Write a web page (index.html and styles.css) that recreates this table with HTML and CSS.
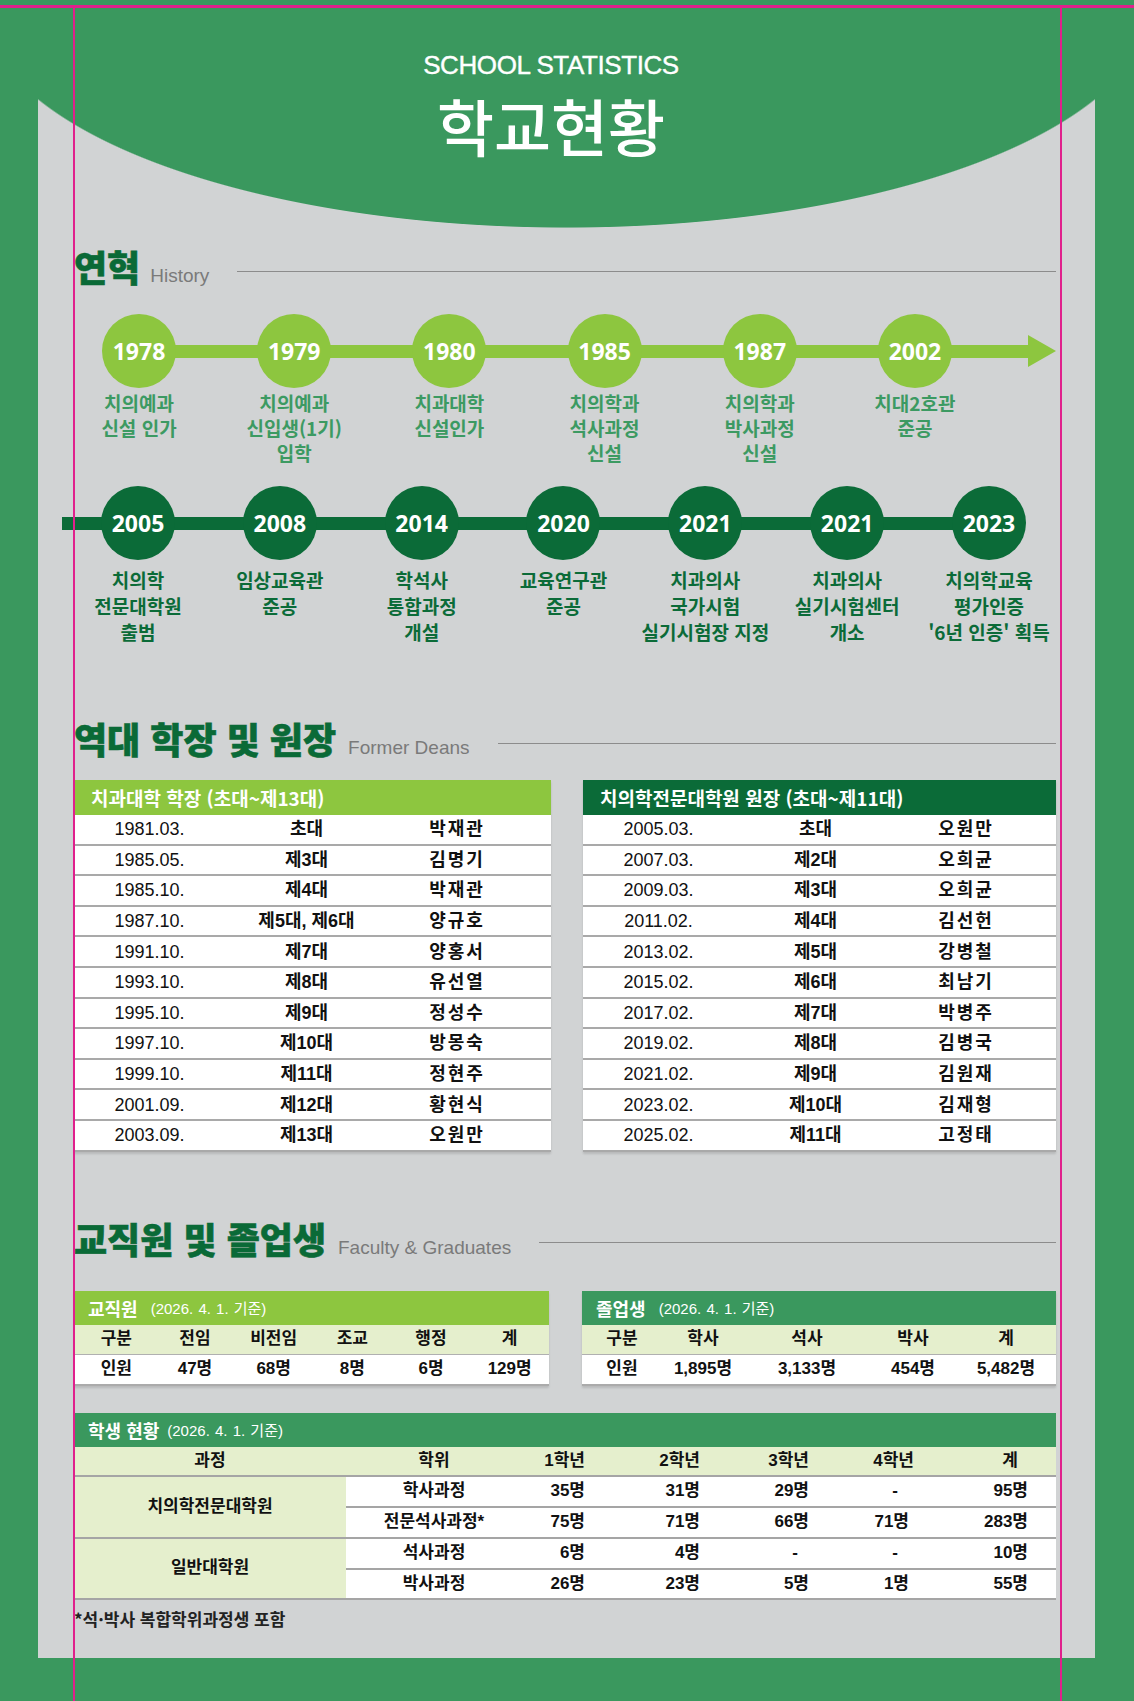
FILE: index.html
```html
<!DOCTYPE html>
<html lang="ko">
<head>
<meta charset="utf-8">
<title>학교현황 - School Statistics</title>
<link rel="stylesheet" href="styles.css">
</head>
<body>
<div class="page">
  <div class="panel">
    <header class="hero">
      <div class="hero-en">SCHOOL STATISTICS</div>
      <h1 class="hero-ko">학교현황</h1>
    </header>

    <main class="content">
      <section class="history">
        <div class="sec-head"><h2>연혁</h2><span class="sub">History</span><span class="rule"></span></div>

        <div class="tl tl-1">
          <div class="tl-item"><div class="dot">1978</div><div class="lbl">치의예과<br>신설 인가</div></div>
          <div class="tl-item"><div class="dot">1979</div><div class="lbl">치의예과<br>신입생(1기)<br>입학</div></div>
          <div class="tl-item"><div class="dot">1980</div><div class="lbl">치과대학<br>신설인가</div></div>
          <div class="tl-item"><div class="dot">1985</div><div class="lbl">치의학과<br>석사과정<br>신설</div></div>
          <div class="tl-item"><div class="dot">1987</div><div class="lbl">치의학과<br>박사과정<br>신설</div></div>
          <div class="tl-item"><div class="dot">2002</div><div class="lbl">치대2호관<br>준공</div></div>
          <div class="tl-arrow"><svg width="28" height="32" viewBox="0 0 28 32"><polygon points="0,0 28,16 0,32" fill="#8dc63f"/></svg></div>
        </div>

        <div class="tl tl-2">
          <div class="tl-item"><div class="dot">2005</div><div class="lbl">치의학<br>전문대학원<br>출범</div></div>
          <div class="tl-item"><div class="dot">2008</div><div class="lbl">임상교육관<br>준공</div></div>
          <div class="tl-item"><div class="dot">2014</div><div class="lbl">학석사<br>통합과정<br>개설</div></div>
          <div class="tl-item"><div class="dot">2020</div><div class="lbl">교육연구관<br>준공</div></div>
          <div class="tl-item"><div class="dot">2021</div><div class="lbl">치과의사<br>국가시험<br>실기시험장 지정</div></div>
          <div class="tl-item"><div class="dot">2021</div><div class="lbl">치과의사<br>실기시험센터<br>개소</div></div>
          <div class="tl-item"><div class="dot">2023</div><div class="lbl">치의학교육<br>평가인증<br>'6년 인증' 획득</div></div>
        </div>
      </section>

      <section class="deans">
        <div class="sec-head"><h2>역대 학장 및 원장</h2><span class="sub">Former Deans</span><span class="rule"></span></div>
        <div class="deans-grid">
          <div class="dtable">
            <div class="dt-head light">치과대학 학장 (초대~제13대)</div>
            <div class="dt-row"><span>1981.03.</span><span class="k">초대</span><span class="nm">박재관</span></div>
            <div class="dt-row"><span>1985.05.</span><span class="k">제3대</span><span class="nm">김명기</span></div>
            <div class="dt-row"><span>1985.10.</span><span class="k">제4대</span><span class="nm">박재관</span></div>
            <div class="dt-row"><span>1987.10.</span><span class="k">제5대, 제6대</span><span class="nm">양규호</span></div>
            <div class="dt-row"><span>1991.10.</span><span class="k">제7대</span><span class="nm">양홍서</span></div>
            <div class="dt-row"><span>1993.10.</span><span class="k">제8대</span><span class="nm">유선열</span></div>
            <div class="dt-row"><span>1995.10.</span><span class="k">제9대</span><span class="nm">정성수</span></div>
            <div class="dt-row"><span>1997.10.</span><span class="k">제10대</span><span class="nm">방몽숙</span></div>
            <div class="dt-row"><span>1999.10.</span><span class="k">제11대</span><span class="nm">정현주</span></div>
            <div class="dt-row"><span>2001.09.</span><span class="k">제12대</span><span class="nm">황현식</span></div>
            <div class="dt-row"><span>2003.09.</span><span class="k">제13대</span><span class="nm">오원만</span></div>
          </div>
          <div class="dtable">
            <div class="dt-head dark">치의학전문대학원 원장 (초대~제11대)</div>
            <div class="dt-row"><span>2005.03.</span><span class="k">초대</span><span class="nm">오원만</span></div>
            <div class="dt-row"><span>2007.03.</span><span class="k">제2대</span><span class="nm">오희균</span></div>
            <div class="dt-row"><span>2009.03.</span><span class="k">제3대</span><span class="nm">오희균</span></div>
            <div class="dt-row"><span>2011.02.</span><span class="k">제4대</span><span class="nm">김선헌</span></div>
            <div class="dt-row"><span>2013.02.</span><span class="k">제5대</span><span class="nm">강병철</span></div>
            <div class="dt-row"><span>2015.02.</span><span class="k">제6대</span><span class="nm">최남기</span></div>
            <div class="dt-row"><span>2017.02.</span><span class="k">제7대</span><span class="nm">박병주</span></div>
            <div class="dt-row"><span>2019.02.</span><span class="k">제8대</span><span class="nm">김병국</span></div>
            <div class="dt-row"><span>2021.02.</span><span class="k">제9대</span><span class="nm">김원재</span></div>
            <div class="dt-row"><span>2023.02.</span><span class="k">제10대</span><span class="nm">김재형</span></div>
            <div class="dt-row"><span>2025.02.</span><span class="k">제11대</span><span class="nm">고정태</span></div>
          </div>
        </div>
      </section>

      <section class="faculty">
        <div class="sec-head"><h2>교직원 및 졸업생</h2><span class="sub">Faculty &amp; Graduates</span><span class="rule"></span></div>
        <div class="fac-grid">
          <div class="ftable fac">
            <div class="ft-head light"><b>교직원</b><small>(2026. 4. 1. 기준)</small></div>
            <div class="ft-row hd"><span>구분</span><span>전임</span><span>비전임</span><span>조교</span><span>행정</span><span>계</span></div>
            <div class="ft-row dat"><span>인원</span><span>47명</span><span>68명</span><span>8명</span><span>6명</span><span>129명</span></div>
          </div>
          <div class="ftable grad">
            <div class="ft-head mid"><b>졸업생</b><small>(2026. 4. 1. 기준)</small></div>
            <div class="ft-row hd"><span>구분</span><span>학사</span><span>석사</span><span>박사</span><span>계</span></div>
            <div class="ft-row dat"><span>인원</span><span>1,895명</span><span>3,133명</span><span>454명</span><span>5,482명</span></div>
          </div>
        </div>

        <div class="stable">
          <div class="ft-head mid"><b>학생 현황</b><small class="tight">(2026. 4. 1. 기준)</small></div>
          <div class="st-grid">
            <div class="c hd ctr">과정</div>
            <div class="c hd ctr">학위</div>
            <div class="c hd num">1학년</div>
            <div class="c hd num">2학년</div>
            <div class="c hd num">3학년</div>
            <div class="c hd num n4h">4학년</div>
            <div class="c hd num nth">계</div>

            <div class="c grp ctr">치의학전문대학원</div>
            <div class="c ctr">학사과정</div>
            <div class="c num">35명</div>
            <div class="c num">31명</div>
            <div class="c num">29명</div>
            <div class="c num dash">-</div>
            <div class="c num nt">95명</div>

            <div class="c ctr">전문석사과정*</div>
            <div class="c num">75명</div>
            <div class="c num">71명</div>
            <div class="c num">66명</div>
            <div class="c num">71명</div>
            <div class="c num nt">283명</div>

            <div class="c grp ctr">일반대학원</div>
            <div class="c ctr">석사과정</div>
            <div class="c num">6명</div>
            <div class="c num">4명</div>
            <div class="c num dash">-</div>
            <div class="c num dash">-</div>
            <div class="c num nt">10명</div>

            <div class="c ctr">박사과정</div>
            <div class="c num">26명</div>
            <div class="c num">23명</div>
            <div class="c num">5명</div>
            <div class="c num">1명</div>
            <div class="c num nt">55명</div>
          </div>
        </div>
        <p class="note">*석·박사 복합학위과정생 포함</p>
      </section>
    </main>
  </div>
</div>
</body>
</html>
```

FILE: styles.css
```css
* { box-sizing: border-box; margin: 0; padding: 0; }

html, body { width: 1134px; height: 1701px; }

body {
  background: #3a985e;
  font-family: "Liberation Sans", "Noto Sans CJK KR", sans-serif;
  color: #1a1a1a;
  overflow: hidden;
}

.page {
  position: relative;
  width: 1134px;
  height: 1701px;
  padding: 0 39px 43px 38px;
}

/* guide lines drawn over the artwork */
.page::before {
  content: "";
  position: absolute;
  left: 0;
  right: 0;
  top: 5px;
  height: 3px;
  background: #e0208c;
}
.page::after {
  content: "";
  position: absolute;
  top: 5px;
  bottom: 0;
  left: 73px;
  width: 985px;
  border-left: 2.5px solid #e0208c;
  border-right: 2.5px solid #e0208c;
  pointer-events: none;
}

.panel {
  height: 1658px;
  padding: 0 39px 0 36px;
  background:
    radial-gradient(ellipse 587px 226px at 528.5px 2px, #3a985e 99.6%, rgba(58, 152, 94, 0) 100%),
    #d1d3d4;
}

/* ---------- hero ---------- */
.hero {
  height: 228px;
  padding-top: 50px;
  padding-right: 28px;
  text-align: center;
  color: #fff;
}
.hero-en {
  font: 400 26px/30px "Liberation Sans", sans-serif;
  letter-spacing: -0.4px;
  -webkit-text-stroke: 0.4px #fff;
}
.hero-ko {
  margin-top: 9px;
  font: 500 62px/72px "Noto Sans CJK KR", sans-serif;
}

/* ---------- section heading ---------- */
.sec-head {
  display: flex;
  align-items: baseline;
  height: 40px;
}
.sec-head h2 {
  font: 900 36px/40px "Noto Sans CJK KR", sans-serif;
  color: #0a6a37;
  white-space: nowrap;
  -webkit-text-stroke: 0.6px #0a6a37;
}
.sub {
  font: 400 19px "Liberation Sans", sans-serif;
  color: #7a7a7a;
  margin-left: 12px;
  white-space: nowrap;
}
.rule {
  flex: 1;
  align-self: center;
  height: 1px;
  background: #8c8c8c;
  margin-top: 10px;
  margin-left: 28px;
}

.history .sec-head { margin-top: 18px; }
.history .sub { margin-left: 10px; }

/* ---------- timeline ---------- */
.tl {
  display: flex;
  align-items: flex-start;
}
.tl-item {
  display: flex;
  flex-direction: column;
  align-items: center;
  text-align: center;
  flex: none;
}
.dot {
  width: 74px;
  height: 74px;
  border-radius: 50%;
  display: flex;
  align-items: center;
  justify-content: center;
  color: #fff;
  font: 700 23px "Noto Sans", sans-serif;
}
.lbl {
  white-space: nowrap;
  font: 700 19px/25px "Noto Sans CJK KR", sans-serif;
  margin-top: 2px;
  color: #3c9a62;
}

.tl-1 {
  margin-top: 28px;
  gap: 25.2px;
  background: linear-gradient(#8dc63f, #8dc63f) no-repeat 65px 30.5px / 890px 13px;
}
.tl-1 .tl-item { width: 130px; }
.tl-1 .dot { background: #8dc63f; }
.tl-arrow {
  margin-left: auto;
  margin-top: 21px;
  width: 28px;
  height: 32px;
  flex: none;
}
.tl-arrow svg { display: block; }

.tl-2 {
  margin-top: 21px;
  margin-left: -12px;
  padding-left: 12px;
  gap: 13.83px;
  background: linear-gradient(#0b6b38, #0b6b38) no-repeat 0 30.5px / 927px 13px;
}
.tl-2 .tl-item { width: 128px; }
.tl-2 .dot { background: #0b6b38; }
.tl-2 .lbl {
  margin-top: 7px;
  line-height: 26px;
  color: #0b6b38;
}

/* ---------- former deans ---------- */
.deans .sec-head { margin-top: 73px; }
.deans-grid {
  display: grid;
  grid-template-columns: 477px 1fr;
  gap: 32px;
  margin-top: 22px;
  align-items: start;
}
.dtable { box-shadow: 0 2px 2px rgba(0, 0, 0, 0.12); }
.dt-head {
  height: 35px;
  padding-left: 17px;
  display: flex;
  align-items: center;
  color: #fff;
  font: 700 19px "Noto Sans CJK KR", sans-serif;
  white-space: nowrap;
}
.light { background: #8dc63f; }
.dark { background: #0b6b38; }
.mid { background: #3a985e; }

.dt-row {
  display: grid;
  grid-template-columns: 151px 163px 138px;
  height: 30.6px;
  align-items: center;
  background: #fff;
  border-bottom: 2px solid #a9a9a9;
  font-size: 18px;
  line-height: 20px;
  text-align: center;
  color: #111;
}
.dt-row .k { font-weight: 700; }
.dt-row .nm { font-weight: 700; letter-spacing: 2px; }

/* ---------- faculty & graduates ---------- */
.faculty .sec-head { margin-top: 66px; }
.fac-grid {
  display: grid;
  grid-template-columns: 475px 1fr;
  gap: 33px;
  margin-top: 33px;
  align-items: start;
}
.ftable { box-shadow: 0 2px 2px rgba(0, 0, 0, 0.12); }
.ft-head {
  height: 34px;
  display: flex;
  align-items: center;
  padding-left: 14px;
  color: #fff;
  white-space: nowrap;
}
.ft-head b { font: 700 18px "Noto Sans CJK KR", sans-serif; }
.ft-head small {
  font: 400 15px "Liberation Sans", "Noto Sans CJK KR", sans-serif;
  word-spacing: 1px;
  margin-left: 13px;
}
.ft-head small.tight { margin-left: 8px; }

.ft-row {
  display: grid;
  align-items: center;
  text-align: center;
  font-weight: 700;
  font-size: 17px;
  line-height: 20px;
  color: #111;
}
.ft-row.hd {
  height: 30px;
  background: #e5efcd;
  border-bottom: 1px solid #b0b0b0;
}
.ft-row.dat {
  height: 31px;
  background: #fff;
  border-bottom: 2px solid #ababab;
}
.fac .ft-row {
  grid-template-columns: repeat(6, 1fr);
  padding-left: 3px;
}
.grad .ft-row {
  grid-template-columns: 80px 82px 126px 86px 1fr;
}

/* ---------- students ---------- */
.stable { margin-top: 27px; }
.st-grid {
  display: grid;
  grid-template-columns: 272px 176px 78px 115px 109px 100px 1fr;
  grid-template-rows: 30px 31px 31px 31px 30px;
  font-weight: 700;
  font-size: 17px;
  line-height: 20px;
  color: #111;
}
.c {
  display: flex;
  align-items: center;
  background: #fff;
  border-bottom: 2px solid #a5a5a5;
  white-space: nowrap;
}
.c.hd { background: #e5efcd; }
.c.grp {
  grid-row: span 2;
  background: #e5efcd;
}
.ctr { justify-content: center; }
.num {
  justify-content: flex-end;
  padding-right: 15px;
}
.num.nt { padding-right: 28px; }
.num.nth { padding-right: 38px; }
.num.n4h { padding-right: 10px; }
.num.dash { padding-right: 26px; }

.note {
  margin-top: 7px;
  font: 700 17px/24px "Noto Sans CJK KR", sans-serif;
  color: #222;
}
```
